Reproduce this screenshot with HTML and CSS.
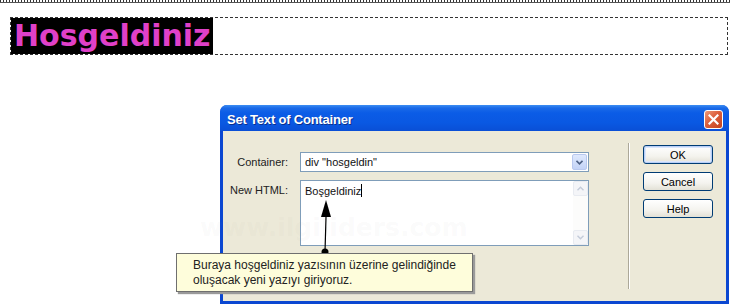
FILE: index.html
```html
<html>

<head>
    <meta charset="utf-8">
    <link rel="stylesheet" href="styles.css">
</head>

<body>
    <div class="ruler"></div>

    <div class="hello-box">
        <span class="hello">Hosgeldiniz</span>
    </div>

    <div class="dialog">
        <div class="titlebar">
            <span class="title">Set Text of Container</span>
            <span class="close">
                <svg width="11" height="11" viewBox="0 0 11 11">
                    <path d="M1.5 1.5 L9.5 9.5 M9.5 1.5 L1.5 9.5" stroke="#fff" stroke-width="2.2" stroke-linecap="square" />
                </svg>
            </span>
        </div>

        <div class="dialog-body">
            <div class="form">
                <div class="label">Container:</div>
                <div class="select">
                    <span class="value">div "hosgeldin"</span>
                    <span class="drop">
                        <svg width="7" height="5" viewBox="0 0 7 5">
                            <path d="M0.5 0.8 L3.5 3.8 L6.5 0.8" fill="none" stroke="#4d6185" stroke-width="1.6" />
                        </svg>
                    </span>
                </div>

                <div class="label">New HTML:</div>
                <div class="textarea">
                    <span class="value">Boşgeldiniz<span class="caret"></span></span>
                    <div class="scrollbar">
                        <span class="scroll-btn">
                            <svg width="7" height="5" viewBox="0 0 7 5">
                                <path d="M0.5 4.2 L3.5 1.2 L6.5 4.2" fill="none" stroke="#c3cbd9" stroke-width="1.4" />
                            </svg>
                        </span>
                        <span class="scroll-btn">
                            <svg width="7" height="5" viewBox="0 0 7 5">
                                <path d="M0.5 0.8 L3.5 3.8 L6.5 0.8" fill="none" stroke="#c3cbd9" stroke-width="1.4" />
                            </svg>
                        </span>
                    </div>
                </div>
            </div>

            <div class="separator"></div>

            <div class="buttons">
                <button class="xp-btn default">OK</button>
                <button class="xp-btn">Cancel</button>
                <button class="xp-btn">Help</button>
            </div>
        </div>
    </div>

    <div class="watermark">www.ilgiliders.com</div>

    <svg class="pointer" width="20" height="60" viewBox="0 0 20 60">
        <path d="M11 17 L10 52" stroke="#000" stroke-width="1.2" />
        <path d="M11 0 L6 17 L16 17 Z" fill="#000" />
        <circle cx="10" cy="52" r="3.5" fill="#000" />
    </svg>

    <div class="tip">
        Buraya hoşgeldiniz yazısının üzerine gelindiğinde<br>
        oluşacak yeni yazıyı giriyoruz.
    </div>
</body>

</html>
```

FILE: styles.css
```css
body {
    width: 730px;
    height: 304px;
    margin: 0;
    background: #fff;
    font-family: 'Liberation Sans', Arial, sans-serif;
    position: relative;
    overflow: hidden;
}

.ruler {
    height: 2px;
    border-bottom: 1px solid #555;
    background: repeating-linear-gradient(90deg, #333 0 1px, transparent 1px 3px);
}

.hello-box {
    margin: 14px 0 0 10px;
    width: 716px;
    height: 36px;
    border: 1px dashed #333;
    display: flex;
}

.hello {
    background: #000;
    color: #e040c8;
    font-family: 'DejaVu Sans', Verdana, sans-serif;
    font-weight: bold;
    font-size: 30px;
    line-height: 36px;
    padding: 0 2px 0 3px;
}

/* XP style dialog */
.dialog {
    margin: 50px 0 0 220px;
    width: 509px;
    height: 199px;
    background: #0b47d1;
    border-radius: 7px 7px 0 0;
    display: flex;
    flex-direction: column;
}

.titlebar {
    height: 26px;
    display: flex;
    align-items: center;
    justify-content: space-between;
    padding: 0 6px 0 7px;
    border-radius: 7px 7px 0 0;
    background: linear-gradient(#3c8ef3 0, #1a6ae8 3px, #0b5ce6 8px, #0a58e2 18px, #0a4fd6 100%);
}

.title {
    color: #fff;
    font-weight: bold;
    font-size: 13px;
    padding-top: 3px;
    letter-spacing: -0.2px;
    text-shadow: 1px 1px 0 #0a2f8c;
}

.close {
    width: 19px;
    height: 19px;
    box-sizing: border-box;
    border: 1px solid #fff;
    border-radius: 3px;
    background: linear-gradient(135deg, #ec9a7a 0, #dd5f3c 45%, #c2421e 100%);
    display: flex;
    align-items: center;
    justify-content: center;
    margin-top: 2px;
}

.dialog-body {
    flex: 1;
    margin: 0 3px 3px 3px;
    background: #ece9d8;
    display: flex;
    align-items: flex-start;
    font-size: 11px;
    color: #111;
}

.form {
    display: grid;
    grid-template-columns: 65px 289px;
    column-gap: 12px;
    row-gap: 8px;
    padding-top: 21px;
}

.label {
    text-align: right;
    line-height: 20px;
    color: #222;
}

.select {
    height: 20px;
    box-sizing: border-box;
    border: 1px solid #7f9db9;
    background: #fff;
    display: flex;
    align-items: center;
    justify-content: space-between;
    padding: 0 1px 0 4px;
}

.drop {
    width: 15px;
    height: 16px;
    box-sizing: border-box;
    border: 1px solid #b9c9ef;
    border-radius: 2px;
    background: linear-gradient(#dfe9fd, #c3d3f6);
    display: flex;
    align-items: center;
    justify-content: center;
}

.textarea {
    height: 66px;
    box-sizing: border-box;
    border: 1px solid #7f9db9;
    background: #fff;
    display: flex;
    justify-content: space-between;
    padding-left: 4px;
}

.textarea .value {
    padding-top: 3px;
    line-height: 14px;
}

.caret {
    display: inline-block;
    width: 1px;
    height: 13px;
    background: #000;
    vertical-align: -2px;
}

.scrollbar {
    width: 15px;
    background: #fcfcfb;
    display: flex;
    flex-direction: column;
    justify-content: space-between;
}

.scroll-btn {
    height: 15px;
    box-sizing: border-box;
    border: 1px solid #e8ebf1;
    border-radius: 2px;
    background: #f4f5f8;
    display: flex;
    align-items: center;
    justify-content: center;
}

.separator {
    margin: 12px 0 0 39px;
    width: 1px;
    height: 146px;
    background: #aca899;
    border-right: 1px solid #fff;
}

.buttons {
    margin: 14px 0 0 13px;
    display: flex;
    flex-direction: column;
    gap: 8px;
}

.xp-btn {
    width: 70px;
    height: 19px;
    padding: 0;
    border: 1px solid #003c74;
    border-radius: 3px;
    background: linear-gradient(#fff 0, #f4f3ee 60%, #e3e1d6 100%);
    font-family: 'Liberation Sans', Arial, sans-serif;
    font-size: 11px;
    color: #000;
}

.xp-btn.default {
    box-shadow: inset 0 0 0 1px #b8cff6, inset 0 0 0 2px #dbe6fb;
}

.watermark {
    position: absolute;
    left: 200px;
    top: 213px;
    font-family: 'DejaVu Sans', Verdana, sans-serif;
    font-weight: bold;
    font-size: 25px;
    color: rgba(150, 150, 150, 0.05);
    pointer-events: none;
}

.pointer {
    position: absolute;
    left: 315px;
    top: 200px;
}

.tip {
    position: absolute;
    left: 176px;
    top: 253px;
    width: 279px;
    height: 37px;
    padding: 0 0 0 16px;
    box-sizing: content-box;
    border: 1px solid #6f6f6f;
    background: #fefddb;
    box-shadow: 2px 2px 1px #9a9a9a;
    font-size: 12px;
    line-height: 15px;
    color: #222;
    display: flex;
    align-items: center;
}
```
